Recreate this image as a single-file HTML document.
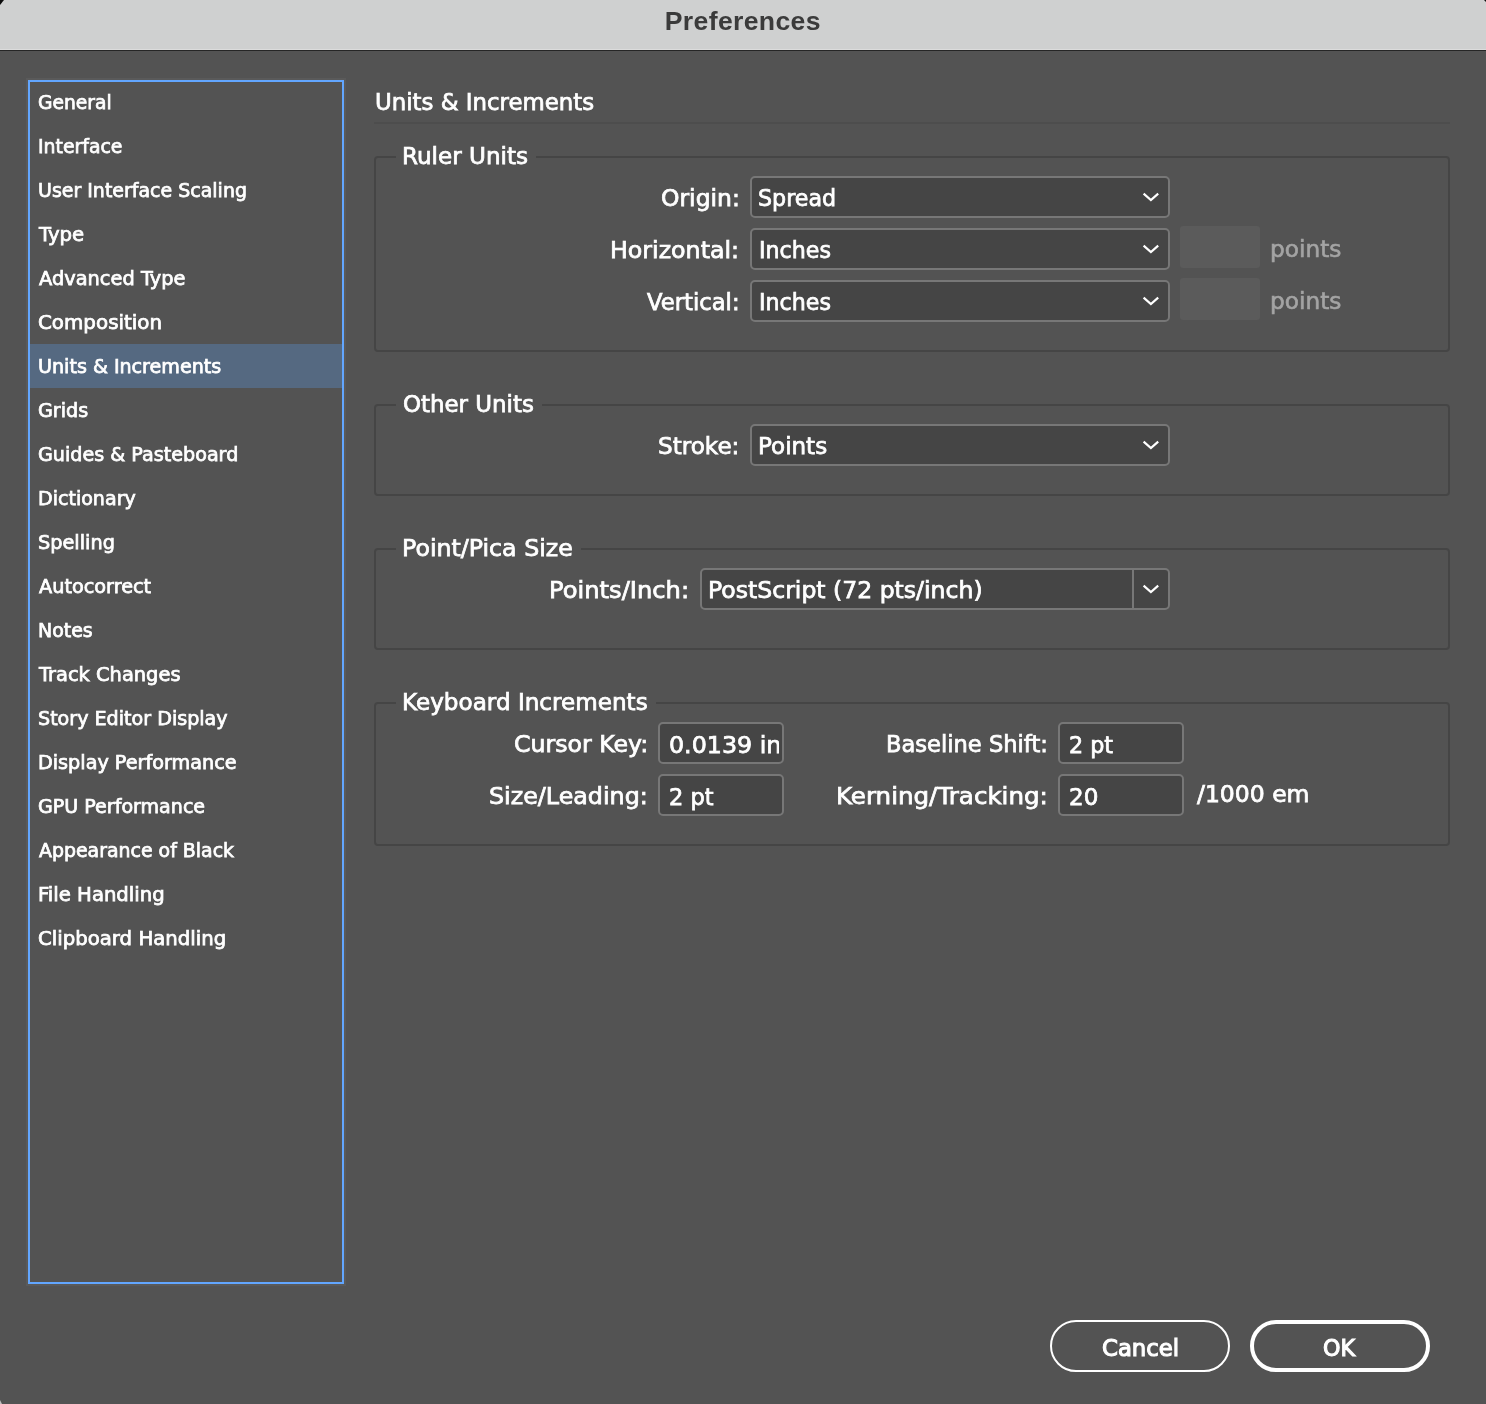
<!DOCTYPE html><html lang="en"><head><meta charset="utf-8"><title>Preferences</title><style>
html,body{margin:0;padding:0}
body{width:1486px;height:1404px;background:#535353;position:relative;overflow:hidden;font-family:"Liberation Sans",sans-serif;color:#fff}
#app{position:absolute;left:0;top:0;width:1486px;height:1404px;will-change:transform}
h1,h2,h3,ul,li,label,span{margin:0;padding:0;font-weight:normal;list-style:none}
.abs{position:absolute}
.t{position:absolute;white-space:nowrap;line-height:40px;height:40px;transform-origin:0 0;font-family:'DejaVu Sans','Liberation Sans',sans-serif}
.titlebar{position:absolute;left:0;top:0;width:1486px;height:49px;background:#cfd0d0;border-bottom:1px solid #dcdcdc}
.tline{position:absolute;left:0;top:50px;width:1486px;height:1px;background:#262626}
.side{position:absolute;left:26px;top:78px;width:316px;height:1204px;border:2px solid #5a5a5a}
.side .in{position:absolute;left:0;top:0;width:312px;height:1200px;border:2px solid #62a6ff}
.sel{position:absolute;left:30px;top:344px;width:312px;height:44px;background:#556981}
.grp{position:absolute;left:374px;width:1072px;border:2px solid #454545;border-radius:4px}
.gap{position:absolute;background:#535353;height:6px}
.dd{position:absolute;height:38px;border:2px solid #777777;border-radius:5px;background:#454545}
.dd svg{position:absolute;right:6px;top:12px}
.tf{position:absolute;width:122px;height:38px;border:2px solid #777777;border-radius:5px;background:#454545}
.dis{position:absolute;width:80px;height:42px;border-radius:3px;background:#5b5b5b}
.btn{position:absolute;top:1320px;width:176px;height:48px;border:2px solid #fff;border-radius:26px}
.btn.ok{width:172px;height:44px;border-width:4px}
</style></head><body>
<div id="app">
<header>
<div class="titlebar"></div><div class="tline"></div>
<div class="abs" style="left:0;top:0;width:0;height:0;border-top:5px solid #0c0c0c;border-right:4.5px solid transparent"></div>
<div class="abs" style="right:0;top:0;width:0;height:0;border-top:2px solid #0c0c0c;border-left:2px solid transparent"></div>
<h1 class="t" style="left:664.78px;top:1.30px;font-size:26.6px;color:#3b3b3b;letter-spacing:0.347px;font-family:'Liberation Sans',sans-serif;font-weight:700">Preferences</h1>
</header>
<nav>
<div class="side"><div class="in"></div></div><div class="sel"></div>
<ul>
<li class="t" style="left:37.79px;top:82.30px;font-size:19.0px;color:#fff;transform:scaleX(0.9841);-webkit-text-stroke:0.75px #fff">General</li>
<li class="t" style="left:37.82px;top:126.30px;font-size:19.0px;color:#fff;transform:scaleX(0.9928);-webkit-text-stroke:0.75px #fff">Interface</li>
<li class="t" style="left:37.99px;top:170.30px;font-size:19.0px;color:#fff;transform:scaleX(0.9985);-webkit-text-stroke:0.75px #fff">User Interface Scaling</li>
<li class="t" style="left:38.96px;top:214.30px;font-size:19.0px;color:#fff;transform:scaleX(1.0360);-webkit-text-stroke:0.75px #fff">Type</li>
<li class="t" style="left:38.59px;top:258.30px;font-size:19.0px;color:#fff;transform:scaleX(1.0200);-webkit-text-stroke:0.75px #fff">Advanced Type</li>
<li class="t" style="left:37.74px;top:302.30px;font-size:19.0px;color:#fff;transform:scaleX(1.0454);-webkit-text-stroke:0.75px #fff">Composition</li>
<li class="t" style="left:37.98px;top:346.30px;font-size:19.0px;color:#fff;transform:scaleX(1.0054);-webkit-text-stroke:0.75px #fff">Units &amp; Increments</li>
<li class="t" style="left:37.78px;top:390.30px;font-size:19.0px;color:#fff;transform:scaleX(1.0084);-webkit-text-stroke:0.75px #fff">Grids</li>
<li class="t" style="left:37.78px;top:434.30px;font-size:19.0px;color:#fff;transform:scaleX(1.0079);-webkit-text-stroke:0.75px #fff">Guides &amp; Pasteboard</li>
<li class="t" style="left:37.80px;top:478.30px;font-size:19.0px;color:#fff;transform:scaleX(1.0030);-webkit-text-stroke:0.75px #fff">Dictionary</li>
<li class="t" style="left:37.61px;top:522.30px;font-size:19.0px;color:#fff;transform:scaleX(1.0150);-webkit-text-stroke:0.75px #fff">Spelling</li>
<li class="t" style="left:38.59px;top:566.30px;font-size:19.0px;color:#fff;transform:scaleX(1.0137);-webkit-text-stroke:0.75px #fff">Autocorrect</li>
<li class="t" style="left:37.81px;top:610.30px;font-size:19.0px;color:#fff;transform:scaleX(0.9976);-webkit-text-stroke:0.75px #fff">Notes</li>
<li class="t" style="left:38.95px;top:654.30px;font-size:19.0px;color:#fff;transform:scaleX(1.0224);-webkit-text-stroke:0.75px #fff">Track Changes</li>
<li class="t" style="left:37.62px;top:698.30px;font-size:19.0px;color:#fff;transform:scaleX(1.0057);-webkit-text-stroke:0.75px #fff">Story Editor Display</li>
<li class="t" style="left:37.79px;top:742.30px;font-size:19.0px;color:#fff;transform:scaleX(1.0105);-webkit-text-stroke:0.75px #fff">Display Performance</li>
<li class="t" style="left:37.78px;top:786.30px;font-size:19.0px;color:#fff;transform:scaleX(1.0034);-webkit-text-stroke:0.75px #fff">GPU Performance</li>
<li class="t" style="left:38.59px;top:830.30px;font-size:19.0px;color:#fff;transform:scaleX(0.9956);-webkit-text-stroke:0.75px #fff">Appearance of Black</li>
<li class="t" style="left:37.76px;top:874.30px;font-size:19.0px;color:#fff;transform:scaleX(1.0337);-webkit-text-stroke:0.75px #fff">File Handling</li>
<li class="t" style="left:37.75px;top:918.30px;font-size:19.0px;color:#fff;transform:scaleX(1.0372);-webkit-text-stroke:0.75px #fff">Clipboard Handling</li>
</ul>
</nav>
<main>
<h2 class="t" style="left:374.59px;top:82.30px;font-size:22.9px;color:#fff;transform:scaleX(0.9979);-webkit-text-stroke:0.75px #fff">Units &amp; Increments</h2>
<div class="abs" style="left:374px;top:122px;width:1076px;height:2px;background:#4d4d4d"></div>
<section><div class="grp" style="top:156px;height:192px"></div><div class="gap" style="left:396px;top:154px;width:140px"></div><h3 class="t" style="left:402.13px;top:135.90px;font-size:22.9px;color:#fff;transform:scaleX(1.0078);-webkit-text-stroke:0.75px #fff">Ruler Units</h3>
<label class="t" style="left:660.60px;top:178.10px;font-size:22.9px;color:#fff;transform:scaleX(1.0250);-webkit-text-stroke:0.75px #fff">Origin:</label><div class="dd" style="left:750px;top:176px;width:416px"><svg width="22" height="14" viewBox="0 0 22 14"><path d="M3.6 3.6 L10.9 10 L18.2 3.6" fill="none" stroke="#fff" stroke-width="2.2" stroke-linecap="butt" stroke-linejoin="miter"/></svg></div><span class="t" style="left:758.37px;top:178.10px;font-size:22.9px;color:#fff;transform:scaleX(0.9687);-webkit-text-stroke:0.75px #fff">Spread</span>
<label class="t" style="left:610.28px;top:230.10px;font-size:22.9px;color:#fff;transform:scaleX(1.0356);-webkit-text-stroke:0.75px #fff">Horizontal:</label><div class="dd" style="left:750px;top:228px;width:416px"><svg width="22" height="14" viewBox="0 0 22 14"><path d="M3.6 3.6 L10.9 10 L18.2 3.6" fill="none" stroke="#fff" stroke-width="2.2" stroke-linecap="butt" stroke-linejoin="miter"/></svg></div><span class="t" style="left:759.20px;top:230.10px;font-size:22.9px;color:#fff;transform:scaleX(0.9676);-webkit-text-stroke:0.75px #fff">Inches</span><div class="dis" style="left:1180px;top:226px"></div><span class="t" style="left:1270.22px;top:228.60px;font-size:22.9px;color:#a4a4a4;transform:scaleX(1.0150);-webkit-text-stroke:0.6px #a4a4a4">points</span>
<label class="t" style="left:646.73px;top:282.10px;font-size:22.9px;color:#fff;transform:scaleX(0.9909);-webkit-text-stroke:0.75px #fff">Vertical:</label><div class="dd" style="left:750px;top:280px;width:416px"><svg width="22" height="14" viewBox="0 0 22 14"><path d="M3.6 3.6 L10.9 10 L18.2 3.6" fill="none" stroke="#fff" stroke-width="2.2" stroke-linecap="butt" stroke-linejoin="miter"/></svg></div><span class="t" style="left:759.20px;top:282.10px;font-size:22.9px;color:#fff;transform:scaleX(0.9676);-webkit-text-stroke:0.75px #fff">Inches</span><div class="dis" style="left:1180px;top:278px"></div><span class="t" style="left:1270.22px;top:280.60px;font-size:22.9px;color:#a4a4a4;transform:scaleX(1.0150);-webkit-text-stroke:0.6px #a4a4a4">points</span>
</section>
<section><div class="grp" style="top:404px;height:88px"></div><div class="gap" style="left:396px;top:402px;width:146px"></div><h3 class="t" style="left:402.92px;top:383.70px;font-size:22.9px;color:#fff;transform:scaleX(1.0007);-webkit-text-stroke:0.75px #fff">Other Units</h3>
<label class="t" style="left:658.32px;top:426.10px;font-size:22.9px;color:#fff;transform:scaleX(1.0093);-webkit-text-stroke:0.75px #fff">Stroke:</label><div class="dd" style="left:750px;top:424px;width:416px"><svg width="22" height="14" viewBox="0 0 22 14"><path d="M3.6 3.6 L10.9 10 L18.2 3.6" fill="none" stroke="#fff" stroke-width="2.2" stroke-linecap="butt" stroke-linejoin="miter"/></svg></div><span class="t" style="left:757.94px;top:426.10px;font-size:22.9px;color:#fff;transform:scaleX(1.0055);-webkit-text-stroke:0.75px #fff">Points</span>
</section>
<section><div class="grp" style="top:548px;height:98px"></div><div class="gap" style="left:396px;top:546px;width:185px"></div><h3 class="t" style="left:401.89px;top:527.50px;font-size:22.9px;color:#fff;transform:scaleX(1.0344);-webkit-text-stroke:0.75px #fff">Point/Pica Size</h3>
<label class="t" style="left:549.45px;top:570.10px;font-size:22.9px;color:#fff;transform:scaleX(1.0571);-webkit-text-stroke:0.75px #fff">Points/Inch:</label><div class="dd" style="left:700px;top:568px;width:466px"><svg width="22" height="14" viewBox="0 0 22 14"><path d="M3.6 3.6 L10.9 10 L18.2 3.6" fill="none" stroke="#fff" stroke-width="2.2" stroke-linecap="butt" stroke-linejoin="miter"/></svg><div class="abs" style="right:34px;top:0;width:2px;height:38px;background:#777777"></div></div><span class="t" style="left:708.00px;top:570.10px;font-size:22.9px;color:#fff;transform:scaleX(1.0286);-webkit-text-stroke:0.75px #fff">PostScript (72 pts/inch)</span>
</section>
<section><div class="grp" style="top:702px;height:140px"></div><div class="gap" style="left:396px;top:700px;width:260px"></div><h3 class="t" style="left:401.93px;top:681.80px;font-size:22.9px;color:#fff;transform:scaleX(1.0090);-webkit-text-stroke:0.75px #fff">Keyboard Increments</h3>
<label class="t" style="left:513.70px;top:724.10px;font-size:22.9px;color:#fff;transform:scaleX(1.0319);-webkit-text-stroke:0.75px #fff">Cursor Key:</label><div class="tf" style="left:658px;top:722px"></div><span class="t" style="left:668.68px;top:725.40px;font-size:22.9px;color:#fff;transform:scaleX(1.0375);-webkit-text-stroke:0.75px #fff;width:105.85px;overflow:hidden">0.0139 in</span>
<label class="t" style="left:885.57px;top:724.10px;font-size:22.9px;color:#fff;transform:scaleX(0.9864);-webkit-text-stroke:0.75px #fff">Baseline Shift:</label><div class="tf" style="left:1058px;top:722px"></div><span class="t" style="left:1068.68px;top:725.40px;font-size:22.9px;color:#fff;transform:scaleX(0.9720);-webkit-text-stroke:0.75px #fff">2 pt</span>
<label class="t" style="left:489.09px;top:776.10px;font-size:22.9px;color:#fff;transform:scaleX(1.0389);-webkit-text-stroke:0.75px #fff">Size/Leading:</label><div class="tf" style="left:658px;top:774px"></div><span class="t" style="left:668.97px;top:777.40px;font-size:22.9px;color:#fff;transform:scaleX(0.9834);-webkit-text-stroke:0.75px #fff">2 pt</span>
<label class="t" style="left:835.72px;top:776.10px;font-size:22.9px;color:#fff;transform:scaleX(1.0720);-webkit-text-stroke:0.75px #fff">Kerning/Tracking:</label><div class="tf" style="left:1058px;top:774px"></div><span class="t" style="left:1068.64px;top:777.40px;font-size:22.9px;color:#fff;transform:scaleX(1.0059);-webkit-text-stroke:0.75px #fff">20</span><span class="t" style="left:1197.23px;top:774.10px;font-size:22.9px;color:#fff;transform:scaleX(1.0261);-webkit-text-stroke:0.75px #fff">/1000 em</span>
</section>
</main>
<footer>
<div class="btn" style="left:1050px"></div><span class="t" style="left:1101.63px;top:1327.60px;font-size:22.5px;color:#fff;transform:scaleX(1.0114);-webkit-text-stroke:1.1px #fff">Cancel</span>
<div class="btn ok" style="left:1250px"></div><span class="t" style="left:1322.64px;top:1327.60px;font-size:22.5px;color:#fff;transform:scaleX(0.9858);-webkit-text-stroke:1.1px #fff">OK</span>
<div class="abs" style="left:0;bottom:0;width:0;height:0;border-bottom:4.5px solid #c0c0c0;border-right:2.5px solid transparent"></div>
</footer>
</div>
</body></html>
